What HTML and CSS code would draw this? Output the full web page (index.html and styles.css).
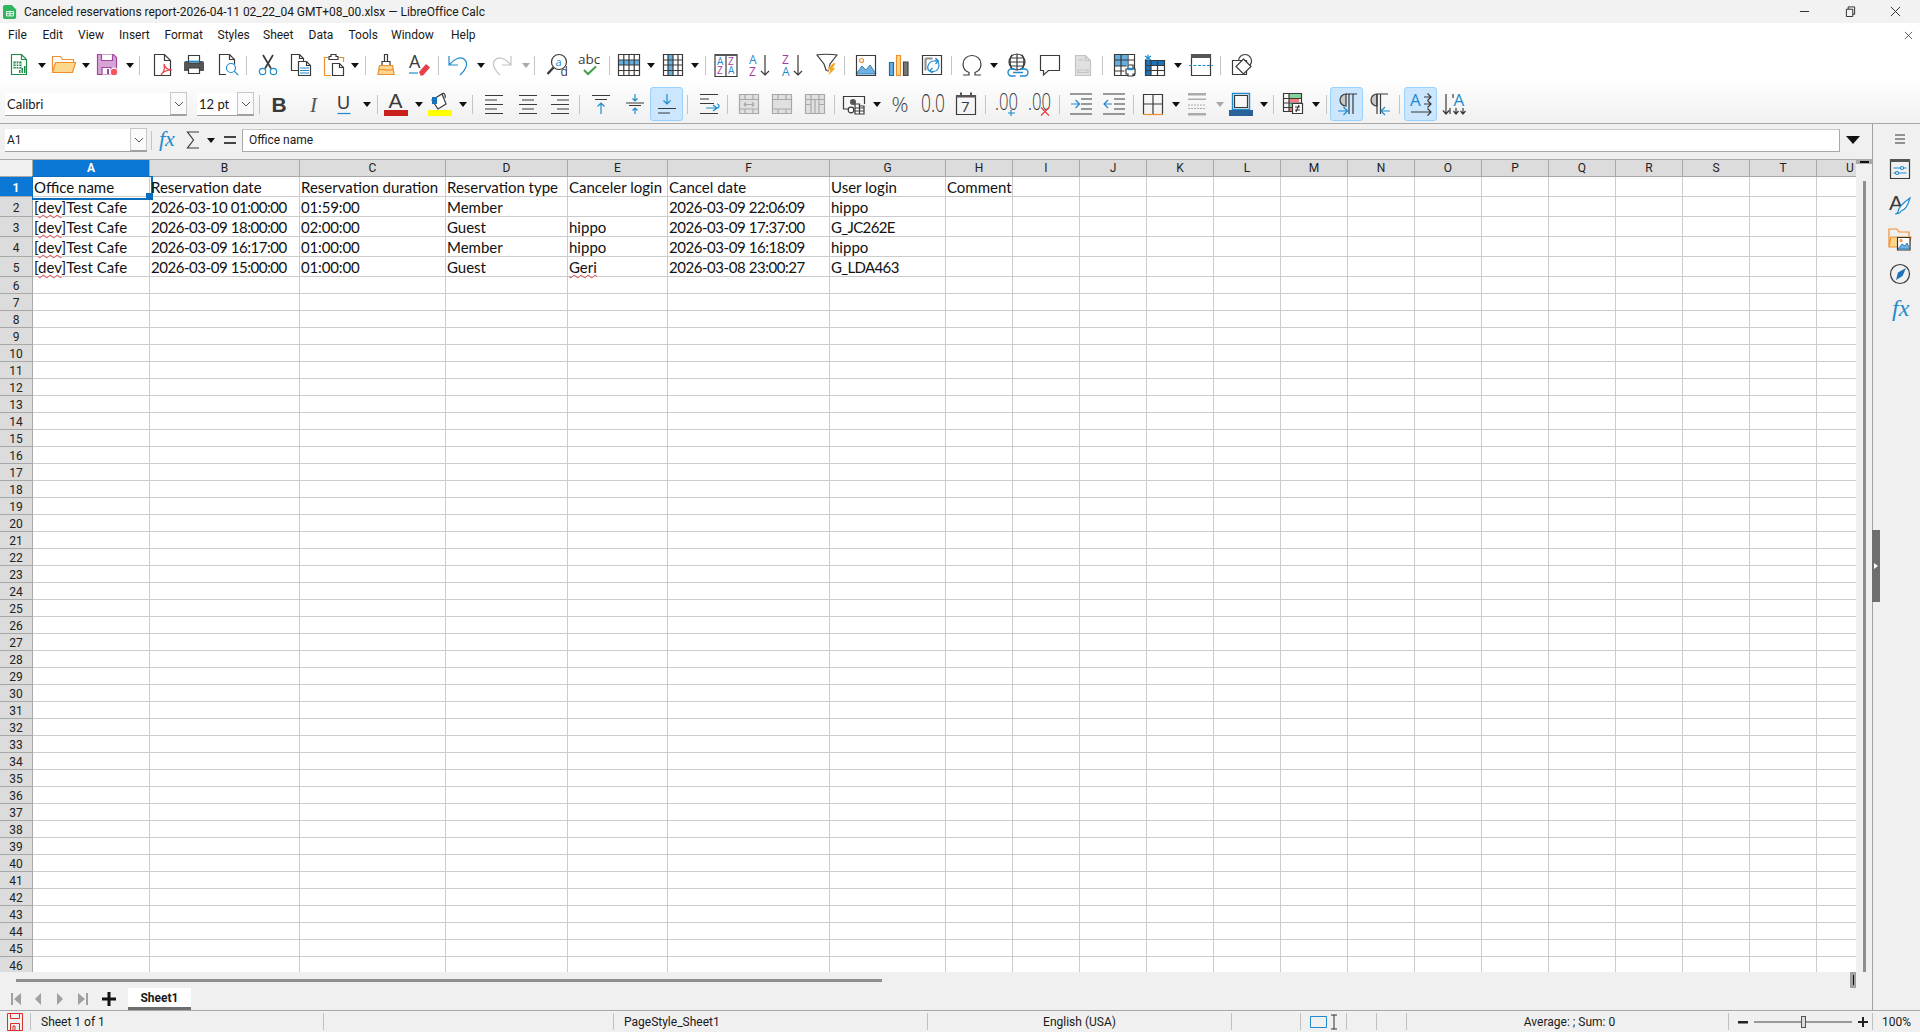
FILE: index.html
```html
<!DOCTYPE html>
<html lang="en">
<head>
<meta charset="utf-8">
<title>LibreOffice Calc</title>
<link rel="stylesheet" href="styles.css">
</head>
<body>
<div class="app">
<header class="titlebar">
  <svg class="appicon" viewBox="0 0 16 16"><path class="f-lo" d="M2 0h8l5 5v9a2 2 0 0 1-2 2H2a2 2 0 0 1-2-2V2a2 2 0 0 1 2-2z"/><path class="w" d="M4 7.5h8v5H4zM8 7.5v5M4 10h8"/></svg>
  <span class="doc">Canceled reservations report-2026-04-11 02_22_04 GMT+08_00.xlsx — LibreOffice Calc</span>
  <div class="winbtns">
    <svg viewBox="0 0 12 12"><path d="M1 6h10"/></svg>
    <svg viewBox="0 0 12 12"><path d="M1.5 3.5h7v8h-7zM3.5 3.5V1h7v8H8.5"/></svg>
    <svg viewBox="0 0 12 12"><path d="M1 1l10 10M11 1 1 11"/></svg>
  </div>
</header>
<nav class="menubar">
  <span>File</span><span>Edit</span><span>View</span><span>Insert</span><span>Format</span><span>Styles</span><span>Sheet</span><span>Data</span><span>Tools</span><span>Window</span><span>Help</span>
  <svg class="docclose" viewBox="0 0 10 10"><path d="M1 1l8 8M9 1 1 9"/></svg>
</nav>
<div class="toolbars">
<div class="tb tb1">
<svg class="i" viewBox="0 0 24 24"><path class="gr" d="M4.5 1.5h10l5 5v15h-15zM14.5 1.5v5h5"/><path class="fgr" d="M6.5 8.5h8v7h-8zM12 17h1.500v3H12zM14.500 15h1.500v5h-1.500zM17 13h1.500v7H17z"/><path class="w" d="M6.500 11h8M6.500 13.500h8M9.200 8.500v7M11.800 8.500v7"/></svg>
<i class="dd"></i>
<svg class="i" viewBox="0 0 24 24"><path class="or" d="M.5 18V3.500h8l2 3h11V10"/><path class="or ffo" d="M.5 19.500 3.500 9.500h20l-3 10z"/></svg>
<i class="dd"></i>
<svg class="i" viewBox="0 0 24 24"><path class="pu fpl" d="M2.500 1.500h16l3 3v17h-19z"/><path class="pu fw" d="M6.500 1.500v6h11v-6M7 21.500v-7h9v7"/><path class="fpu" d="M12 16h2v5h-2z"/><circle class="fred" cx="19" cy="19" r="3.800"/></svg>
<i class="dd"></i>
<i class="sep"></i>
<svg class="i" viewBox="0 0 24 24"><path d="M3.500 1.500h10l6 6v15h-16zM13.500 1.500v6h6"/><path class="re" d="M10 22c3-3 4-7 3-11 1 4 4 6 8 6-5 0-9 1-11 5z"/></svg>
<svg class="i" viewBox="0 0 24 24"><path class="fdk" d="M4 8h16a2 2 0 0 1 2 2v8H2v-8a2 2 0 0 1 2-2z"/><path class="fw" d="M6.500 2.500h11V10h-11zM6.500 15h11v5.500h-11z"/><path class="bl bold" d="M6.500 8.500h11"/></svg>
<svg class="i" viewBox="0 0 24 24"><path d="M10 21.500H3.500v-20h10l5 5v5M13.500 1.500v5h5"/><circle class="bl" cx="15" cy="15" r="4.500"/><path class="bl" d="M18.200 18.200l4 4"/></svg>
<i class="sep"></i>
<svg class="i" viewBox="0 0 24 24"><path class="bold" d="M7 2l8 13.500M17 2 9 15.500"/><circle class="bl" cx="6.500" cy="18.500" r="3.200"/><circle class="bl" cx="17.500" cy="18.500" r="3.200"/></svg>
<svg class="i" viewBox="0 0 24 24"><path d="M9.500 17.500h-7v-16h8l4 4v2.500M10.500 1.500v4h4"/><path class="fw" d="M9.500 8.500h8l4 4v10h-12z"/><path d="M17.500 8.500v4h4"/><path class="bl" d="M11 15h9M11 17.500h9M11 20h9"/></svg>
<svg class="i" viewBox="0 0 24 24"><path class="or" d="M6 4.500H2.500v18H9M17 4.500h4.500V9"/><path d="M7 6.500V3.500h2V1.500h5v2h2v3z"/><path class="fw" d="M10.500 10.500h7l4 4v8h-11z"/><path d="M17.500 10.500v4h4"/></svg>
<i class="dd"></i>
<i class="sep"></i>
<svg class="i" viewBox="0 0 24 24"><path d="M10.500 1.500h3v7h-3zM8 8.500h8v4H8z"/><path class="or ffo" d="M5.500 12.500h13l1.500 9H4z"/><path class="or" d="M4.500 17c5-2 10 2 15-1"/></svg>
<svg class="i" viewBox="0 0 24 24"><text class="t" x="2" y="15" font-size="18">A</text><path class="bl" d="M2 20h9"/><path class="fred2" d="M12 19l7-8 4 3.500-7 8h-2.500z"/></svg>
<i class="sep"></i>
<svg class="i" viewBox="0 0 24 24"><path class="bl" d="M3 3v9h9M3.500 11.500C8 6 15 2.500 19 7s-.5 11-5 15"/></svg>
<i class="dd"></i>
<svg class="i" viewBox="0 0 24 24"><path class="gy" d="M21 3v9h-9M20.500 11.500C16 6 9 2.500 5 7s.5 11 5 15"/></svg>
<i class="dd off"></i>
<i class="sep"></i>
<svg class="i" viewBox="0 0 24 24"><circle cx="14" cy="9" r="7.500"/><path class="thick" d="M8.500 14.500 2.500 21"/><text class="t tb-bl" x="10.500" y="12.500" font-size="11">a</text><text class="t" x="15.500" y="22.500" font-size="12">d</text></svg>
<svg class="i" viewBox="0 0 24 24"><text class="t" x="1" y="11" font-size="13.500">abc</text><path class="gn" d="M7 17l4 4 8-7.500"/></svg>
<i class="sep"></i>
<svg class="i" viewBox="0 0 24 24"><path class="fbl" d="M2 7h20v5H2z"/><path d="M1.500 1.500h21v21h-21zM1.500 7h21M1.500 12h21M1.500 17.500h21M6.800 1.500v21M12 1.500v21M17.200 1.500v21"/></svg>
<i class="dd"></i>
<svg class="i" viewBox="0 0 24 24"><path class="fbl" d="M7 2h5v20H7z"/><path d="M2.500 1.500h19v21h-19zM2.500 7h19M2.500 12h19M2.500 17.500h19M7 1.500v21M12 1.500v21M17 1.500v21"/></svg>
<i class="dd"></i>
<i class="sep"></i>
<svg class="i" viewBox="0 0 24 24"><path d="M1 1.500h22v22H1zM12 3v20"/><path class="fdk" d="M1 1h22v2H1z"/><text class="t tb-bl" x="3" y="12" font-size="10">A</text><text class="t tb-pu" x="3" y="21" font-size="10">Z</text><text class="t tb-pu" x="14" y="12" font-size="10">Z</text><text class="t tb-bl" x="14" y="21" font-size="10">A</text></svg>
<svg class="i" viewBox="0 0 24 24"><text class="t tb-bl" x="1" y="11" font-size="12">A</text><text class="t tb-pu" x="1" y="22.500" font-size="12">Z</text><path d="M17 2v20M13 18l4 4 4-4"/></svg>
<svg class="i" viewBox="0 0 24 24"><text class="t tb-pu" x="1" y="11" font-size="12">Z</text><text class="t tb-bl" x="1" y="22.500" font-size="12">A</text><path d="M17 2v20M13 18l4 4 4-4"/></svg>
<svg class="i" viewBox="0 0 24 24"><path d="M2 2c3-1 15-1 20 0l-7 9v1l-2 6-2-1-2-6z"/><path class="ffl" d="M18 10l-6 7h3l-2 6 8-8h-3l3-5z"/></svg>
<i class="sep"></i>
<svg class="i" viewBox="0 0 24 24"><path class="fmt" d="M2 21l6-8 4 4 4-5 6 9z"/><path d="M2.500 2.500h19v20h-19z"/><circle class="or" cx="7.500" cy="7.500" r="2"/></svg>
<svg class="i" viewBox="0 0 24 24"><path class="fbl2" d="M2.500 9.500h4v13h-4z"/><path class="or ffo" d="M9.500 2.500h4v20h-4z"/><path class="fgy" d="M16.500 9h4.500v13.500h-4.500z"/></svg>
<svg class="i" viewBox="0 0 24 24"><path d="M2.500 2.500h19v19h-19z"/><path class="gy2" d="M5.500 5.500h7M5.500 5.500v12"/><path class="bl" d="M9 18c-3-4 0-10 5-10h4M15.500 5l3 3-3 3M15 7c4 1 5 5 3 9-2 3-5 3-8 2M12.500 15l-3 3 3 2"/></svg>
<i class="sep"></i>
<svg class="i" viewBox="0 0 24 24"><path d="M3 22h6v-2.500C5 18 3 14.500 3 11c0-5 4-8.500 9-8.500s9 3.500 9 8.500c0 3.500-2 7-6 8.500V22h6"/></svg>
<i class="dd"></i>
<svg class="i" viewBox="0 0 24 24"><circle cx="11" cy="9" r="8"/><path d="M3 9h16M11 1v16M6 1.500c-3 4-2 12 0 15M16 1.500c3 4 2 12 0 15M4 5h14M4 13h14"/><path class="bl2" d="M9.500 16h-4a3.500 3.500 0 0 0 0 7h4M14 16h4.500a3.500 3.500 0 0 1 0 7H14M7 19.500h10"/></svg>
<svg class="i" viewBox="0 0 24 24"><path d="M2.500 2.500h19v15h-11l-5 4.500v-4.500h-3z"/></svg>
<svg class="i" viewBox="0 0 24 24"><path class="gy ffg" d="M4.500 2.500h10l5 5v15h-15z"/><path class="gy" d="M14.500 2.500v5h5M7 17h10v2.500H7zM7 7h5"/></svg>
<i class="sep"></i>
<svg class="i" viewBox="0 0 24 24"><path class="fbl" d="M2 2h12v11H2z"/><path d="M1.500 1.500h20v21h-8h-12zM1.500 7h20M1.500 13h12M1.500 18h10M8 1.500v21M15 1.500v10"/><path class="fw" d="M15 12h5v4h-5zM13 16h9v5h-2v2h-5v-2h-2z"/><path class="bl thick" d="M15 16h5"/></svg>
<svg class="i" viewBox="0 0 24 24"><path class="fbld" d="M2 7h6v16H2zM8 7h14v5H8z"/><path d="M2.500 7.500h19v15h-19zM8 7.500v15M2.500 12.500h19M2.500 17.500h19M14.500 7.500v15"/><path class="bl" d="M5 1.500v7M2 3l6 4M8 3 2 7"/></svg>
<i class="dd"></i>
<svg class="i" viewBox="0 0 24 24"><path d="M2.500 1.500h19v21h-19z"/><path class="fdk" d="M2 1h20v4H2z"/><path class="bl dash" d="M0 12.500h24"/></svg>
<i class="sep"></i>
<svg class="i" viewBox="0 0 24 24"><circle class="fw" cx="15" cy="8" r="6.500"/><path class="fw" d="M2.500 7.500h14v14h-14z"/><path class="fw" d="M13.500 6 21 13.500 13.500 21 6 13.500z"/></svg>
</div>
<div class="tb tb2">
<div class="combo font"><span>Calibri</span><button class="chev"><svg viewBox="0 0 10 6"><path d="M1 1l4 4 4-4"/></svg></button></div>
<div class="combo size"><span>12 pt</span><button class="chev"><svg viewBox="0 0 10 6"><path d="M1 1l4 4 4-4"/></svg></button></div>
<i class="sep"></i>
<svg class="i" viewBox="0 0 24 24"><text class="t lib bd" x="4.500" y="20" font-size="21">B</text></svg>
<svg class="i" viewBox="0 0 24 24"><text class="t ser it gt" x="7" y="20" font-size="21">I</text></svg>
<svg class="i" viewBox="0 0 24 24"><text class="t lib" x="5" y="17" font-size="18">U</text><path class="bl" d="M5.500 21.500h13"/></svg>
<i class="dd"></i>
<i class="sep"></i>
<svg class="i" viewBox="0 0 24 24"><text class="t lib" x="4.500" y="16" font-size="21">A</text><path class="frd" d="M0 18h24v6H0z"/></svg>
<i class="dd"></i>
<svg class="i" viewBox="0 0 24 24"><path class="fyl" d="M0 18h24v6H0z"/><path class="fw" d="M4 8l10-6 4 10-8 5z"/><path class="fbld" d="M4 5h5v7H4z"/><path d="M14 2c2-2 4 1 3 4"/></svg>
<i class="dd"></i>
<i class="sep"></i>
<svg class="i" viewBox="0 0 24 24"><path d="M3 3.500h18M3 8h12M3 12.500h18M3 17h12M3 21.500h18"/></svg>
<svg class="i" viewBox="0 0 24 24"><path d="M3 3.500h18M6 8h12M3 12.500h18M6 17h12M3 21.500h18"/></svg>
<svg class="i" viewBox="0 0 24 24"><path d="M3 3.500h18M9 8h12M3 12.500h18M9 17h12M3 21.500h18"/></svg>
<i class="sep"></i>
<svg class="i" viewBox="0 0 24 24"><path d="M3 3.500h18M6 7.500h12"/><path class="bl" d="M12 22V11M8.500 14.500 12 11l3.500 3.500"/></svg>
<svg class="i" viewBox="0 0 24 24"><path d="M3 11h18M6 13.500h12"/><path class="bl" d="M12 2v7M9.500 6.500 12 9l2.500-2.500M12 22v-6M9.500 18.500 12 16l2.500 2.500"/></svg>
<div class="on"><svg class="i" viewBox="0 0 24 24"><path class="bl" d="M12 2v10M8.500 8.500 12 12l3.500-3.500"/><path d="M3 16.500h18M3 21h12"/></svg></div>
<i class="sep"></i>
<svg class="i" viewBox="0 0 24 24"><path d="M3 2.500h18M3 7h9M3 11.500h14M3 21.500h18"/><path class="bl" d="M9 16h11a2 2 0 0 0 0-4M16 13l4 3-4 3"/></svg>
<i class="sep"></i>
<svg class="i" viewBox="0 0 24 24"><path class="g2 ffg" d="M2.500 2.500h19v19h-19z"/><path class="g2" d="M2.500 7.500h19M2.500 17h19M8 2.500v5M16 2.500v5M8 17v4.500M16 17v4.500M7 12.500h10M7 12.500l2-2M7 12.500l2 2M17 12.500l-2-2M17 12.500l-2 2"/></svg>
<svg class="i" viewBox="0 0 24 24"><path class="g2 ffg" d="M2.500 2.500h19v19h-19z"/><path class="g2" d="M2.500 7.500h19M2.500 17h19M8 2.500v5M16 2.500v5M8 17v4.500M16 17v4.500"/></svg>
<svg class="i" viewBox="0 0 24 24"><path class="g2 ffg" d="M2.500 2.500h19v19h-19z"/><path class="g2" d="M2.500 7.500h19M8 2.500v5M16 2.500v5M8 7.500v14M16 7.500v14M12 7.500v14M2.500 12.500h6M16 12.500h5.500"/></svg>
<i class="sep"></i>
<svg class="i" viewBox="0 0 24 24"><path d="M7 17H1.500V4.500h21V12"/><circle class="fdk" cx="11" cy="10" r="3"/><circle class="fw" cx="9" cy="18" r="2.800"/><path class="fw" d="M13 12h4.500v2h4.500v8h-9z"/><path d="M13 16h9M13 19h9M17.500 12v10"/></svg>
<i class="dd"></i>
<svg class="i" viewBox="0 0 24 24"><text class="t thin" x="3.500" y="20" font-size="21">%</text></svg>
<svg class="i" viewBox="0 0 24 24"><text class="t thin" x="0" y="20" font-size="25" textLength="24" lengthAdjust="spacingAndGlyphs">0.0</text></svg>
<svg class="i" viewBox="0 0 24 24"><path d="M2.500 3.500h19v19h-19z"/><path class="fdk" d="M2 3h20v2.500H2zM6 .5h2v3H6zM16 .5h2v3h-2z"/><text class="t" x="7" y="20" font-size="15">7</text></svg>
<i class="sep"></i>
<svg class="i" viewBox="0 0 24 24"><text class="t thin" x="0" y="18" font-size="24" textLength="23" lengthAdjust="spacingAndGlyphs">.00</text><path class="bl" d="M16 18v6M13 21h7"/></svg>
<svg class="i" viewBox="0 0 24 24"><text class="t thin" x="0" y="18" font-size="24" textLength="23" lengthAdjust="spacingAndGlyphs">.00</text><path class="re" d="M13 15.500l8 8M21 15.500l-8 8"/></svg>
<i class="sep"></i>
<svg class="i" viewBox="0 0 24 24"><path d="M1 2h22M12 7h11M12 12h11M12 17h11M1 22h22"/><path class="bl" d="M2 12h8M6.500 8l4 4-4 4"/></svg>
<svg class="i" viewBox="0 0 24 24"><path d="M1 2h22M12 7h11M12 12h11M12 17h11M1 22h22"/><path class="bl" d="M10 12H2M6 8l-4 4 4 4"/></svg>
<i class="sep"></i>
<svg class="i" viewBox="0 0 24 24"><path d="M2.500 22V2.500h19V22M12 2.500V22M2.500 12h19"/><path class="or" d="M2 22.500h20"/></svg>
<i class="dd"></i>
<svg class="i" viewBox="0 0 24 24"><path class="g3" d="M3 1h18v2.500H3zM3 6.500h18v1.500H3z"/><path class="g4" d="M3 13h18M3 16.500h18"/><path class="g3" d="M3 21h18v2.500H3z"/></svg>
<i class="dd off"></i>
<svg class="i" viewBox="0 0 24 24"><path class="bl2" d="M3.500 1.500h17v16h-17z"/><path d="M5.500 3.500h13v12h-13z"/><path class="fbar" d="M0 18h24v6H0z"/></svg>
<i class="dd"></i>
<i class="sep"></i>
<svg class="i" viewBox="0 0 24 24"><path class="fg2" d="M8 2h12v5H8z"/><path class="frd2" d="M8 7h10v3H8zM8 15h3v4H8z"/><path class="fg3" d="M8 11h6v4H8z"/><path d="M2.500 1.500h18v18h-18zM2.500 6.500h18M2.500 11h18M2.500 15.500h18M8 1.500v18"/><path class="fw" d="M11.500 11.500h10v10h-10z"/><path d="M14 15h5M14 18h5M18 13l-3 7"/></svg>
<i class="dd"></i>
<i class="sep"></i>
<div class="on"><svg class="i" viewBox="0 0 24 24"><path class="gf" d="M11 2a6 6 0 1 0 0 12z"/><path d="M11 2h11M14 2v20M18 2v20"/><path class="bl" d="M3 19h9M8.500 15l4 4-4 4"/></svg></div>
<svg class="i" viewBox="0 0 24 24"><path class="gf" d="M9 2a6 6 0 1 0 0 12z"/><path d="M9 2h11M9 2v20M12.500 2v20"/><path class="bl" d="M22 19h-9M17 15l-4 4 4 4"/></svg>
<i class="sep"></i>
<div class="on"><svg class="i" viewBox="0 0 24 24"><text class="t tb-bl" x="1" y="14" font-size="17">A</text><path class="bl0" d="M15 5h7M18.500 1.500 22 5l-3.500 3.500M15 12h7M18.500 8.500 22 12l-3.500 3.500M2 20h20M18.500 16.500 22 20l-3.500 3.500"/></svg></div>
<svg class="i" viewBox="0 0 24 24"><text class="t tb-bl" x="11.500" y="14" font-size="17">A</text><path d="M4 2v20M1 18.500 4 22l3-3.500M11 2v4M14 16v6M11.500 19 14 22l2.500-3M21 16v6M18.500 19 21 22l2.500-3M8 16v6"/></svg>
</div>
</div>
<div class="work">
<div class="main">
<div class="formula">
  <div class="combo name"><span>A1</span><button class="chev"><svg viewBox="0 0 10 6"><path d="M1 1l4 4 4-4"/></svg></button></div>
  <i class="sep"></i>
  <svg class="i" viewBox="0 0 24 24"><text class="t ser it tb-bl" x="2" y="18" font-size="22">fx</text></svg>
  <svg class="i sm" viewBox="0 0 14 24"><path d="M13 4H1.500l6 8-6 8H13"/></svg>
  <i class="dd"></i>
  <div class="eq"></div>
  <div class="finput">Office name</div>
  <i class="bigdd"></i>
</div>
<div class="sheetrow">
<div class="sheet">
<div class="rowheads">
<div class="corner"></div>
<div class="rh tall sel">1</div><div class="rh tall">2</div><div class="rh tall">3</div><div class="rh tall">4</div><div class="rh tall">5</div>
<div class="rh">6</div><div class="rh">7</div><div class="rh">8</div><div class="rh">9</div><div class="rh">10</div><div class="rh">11</div><div class="rh">12</div><div class="rh">13</div><div class="rh">14</div><div class="rh">15</div><div class="rh">16</div><div class="rh">17</div><div class="rh">18</div><div class="rh">19</div><div class="rh">20</div><div class="rh">21</div><div class="rh">22</div><div class="rh">23</div><div class="rh">24</div><div class="rh">25</div><div class="rh">26</div><div class="rh">27</div><div class="rh">28</div><div class="rh">29</div><div class="rh">30</div><div class="rh">31</div><div class="rh">32</div><div class="rh">33</div><div class="rh">34</div><div class="rh">35</div><div class="rh">36</div><div class="rh">37</div><div class="rh">38</div><div class="rh">39</div><div class="rh">40</div><div class="rh">41</div><div class="rh">42</div><div class="rh">43</div><div class="rh">44</div><div class="rh">45</div><div class="rh">46</div>
</div>
<div class="col ca"><div class="ch sel">A</div><div class="cells"><div class="cell cur">Office name</div><div class="cell">[<u>dev</u>]Test Cafe</div><div class="cell">[<u>dev</u>]Test Cafe</div><div class="cell">[<u>dev</u>]Test Cafe</div><div class="cell">[<u>dev</u>]Test Cafe</div></div></div>
<div class="col cb"><div class="ch">B</div><div class="cells"><div class="cell">Reservation date</div><div class="cell dt">2026-03-10 01:00:00</div><div class="cell dt">2026-03-09 18:00:00</div><div class="cell dt">2026-03-09 16:17:00</div><div class="cell dt">2026-03-09 15:00:00</div></div></div>
<div class="col cc"><div class="ch">C</div><div class="cells"><div class="cell">Reservation duration</div><div class="cell tm">01:59:00</div><div class="cell tm">02:00:00</div><div class="cell tm">01:00:00</div><div class="cell tm">01:00:00</div></div></div>
<div class="col cd"><div class="ch">D</div><div class="cells"><div class="cell">Reservation type</div><div class="cell">Member</div><div class="cell">Guest</div><div class="cell">Member</div><div class="cell">Guest</div></div></div>
<div class="col ce"><div class="ch">E</div><div class="cells"><div class="cell">Canceler login</div><div class="cell"></div><div class="cell">hippo</div><div class="cell">hippo</div><div class="cell"><u>Geri</u></div></div></div>
<div class="col cf"><div class="ch">F</div><div class="cells"><div class="cell">Cancel date</div><div class="cell dt">2026-03-09 22:06:09</div><div class="cell dt">2026-03-09 17:37:00</div><div class="cell dt">2026-03-09 16:18:09</div><div class="cell dt">2026-03-08 23:00:27</div></div></div>
<div class="col cg"><div class="ch">G</div><div class="cells"><div class="cell">User login</div><div class="cell">hippo</div><div class="cell code">G_JC262E</div><div class="cell">hippo</div><div class="cell code">G_LDA463</div></div></div>
<div class="col"><div class="ch">H</div><div class="cells"><div class="cell">Comment</div></div></div>
<div class="col"><div class="ch">I</div><div class="cells"></div></div>
<div class="col"><div class="ch">J</div><div class="cells"></div></div>
<div class="col"><div class="ch">K</div><div class="cells"></div></div>
<div class="col"><div class="ch">L</div><div class="cells"></div></div>
<div class="col"><div class="ch">M</div><div class="cells"></div></div>
<div class="col"><div class="ch">N</div><div class="cells"></div></div>
<div class="col"><div class="ch">O</div><div class="cells"></div></div>
<div class="col"><div class="ch">P</div><div class="cells"></div></div>
<div class="col"><div class="ch">Q</div><div class="cells"></div></div>
<div class="col"><div class="ch">R</div><div class="cells"></div></div>
<div class="col"><div class="ch">S</div><div class="cells"></div></div>
<div class="col"><div class="ch">T</div><div class="cells"></div></div>
<div class="col"><div class="ch">U</div><div class="cells"></div></div>
</div>
<div class="vscroll"><div class="vsplit"><i></i></div><div class="vthumb"></div></div>
</div>
<div class="below">
  <div class="hscrollrow"><div class="hthumb"></div><div class="hsplit"><i></i></div></div>
  <div class="tabs">
    <svg class="nav" viewBox="0 0 12 14"><path class="navf" d="M0 1h2v12H0zM10 1v12L3 7z"/></svg>
    <svg class="nav" viewBox="0 0 12 14"><path class="navf" d="M9 1v12L3 7z"/></svg>
    <svg class="nav" viewBox="0 0 12 14"><path class="navf" d="M3 1v12l6-6z"/></svg>
    <svg class="nav" viewBox="0 0 12 14"><path class="navf" d="M12 1h-2v12h2zM2 1v12l7-6z"/></svg>
    <svg class="plus" viewBox="0 0 14 14"><path d="M0 5.500h14v3H0zM5.500 0h3v14h-3z"/></svg>
    <div class="tab">Sheet1</div>
  </div>
</div>
</div>
<aside class="sidebar">
  <svg class="burger" viewBox="0 0 12 12"><path d="M1 2h10M1 6h10M1 10h10"/></svg>
  <svg class="i" viewBox="0 0 24 24"><path d="M2.500 2.500h19v19h-19z"/><path class="fdk" d="M2 2h20v3H2z"/><path class="bl" d="M5.500 11h13M5.500 16h13"/><circle class="bl fw" cx="14" cy="11" r="1.500"/><circle class="bl fw" cx="9" cy="16" r="1.500"/></svg>
  <svg class="i" viewBox="0 0 24 24"><text class="t lib" x="1" y="18" font-size="21">A</text><path class="bl fw" d="M10 20c0-4 5-9 12-14-2 7-5 12-9 13-1 2-2 3-6 3 2 0 2-1 3-2z"/></svg>
  <svg class="i" viewBox="0 0 24 24"><path class="or" d="M1 19V2h8l2 3h10v5"/><path class="or ffo" d="M1 20 3 10h20l-2 10z"/><path class="fw" d="M9.500 10.500h12.500V23H9.500z"/><path class="fmt" d="M10 22l4-5 3 2 2-3 3 6z"/><circle class="or" cx="13" cy="13.500" r="1"/></svg>
  <svg class="i" viewBox="0 0 24 24"><circle cx="12" cy="12" r="9.500"/><path class="fbld" d="M18 6l-3.500 8L8 18l2-7.500z"/></svg>
  <svg class="i" viewBox="0 0 24 24"><text class="t ser it tb-bl" x="4" y="19" font-size="24">fx</text></svg>
</aside>
<div class="handle"><i></i></div>
</div>
<footer class="status">
  <div class="st"><svg class="stsave" viewBox="0 0 16 18"><path d="M.5.500h15v17H.500zM3.500.500v5h9v-5M3.500 17.500v-7h9v7M6 17v-4h2v4"/></svg></div>
  <div class="st left">Sheet 1 of 1</div>
  <div class="st"></div>
  <div class="st left">PageStyle_Sheet1</div>
  <div class="st">English (USA)</div>
  <div class="st"></div>
  <div class="st"><svg class="selm" viewBox="0 0 28 16"><path class="bl" d="M.5 2.500h16v11H.5z"/><path d="M21 1h6M24 1v14M21 15h6"/></svg></div>
  <div class="st"></div>
  <div class="st"></div>
  <div class="st avg">Average: ; Sum: 0</div>
  <div class="st zoom"><svg class="zm" viewBox="0 0 10 10"><path d="M0 4h10v2.500H0z"/></svg><div class="slider"><i></i></div><svg class="zm" viewBox="0 0 10 10"><path d="M0 4h10v2H0zM4 0h2v10H4z"/></svg></div>
  <div class="st last">100%</div>
</footer>
</div>
</body>
</html>
```
FILE: styles.css
```css
*{box-sizing:border-box}
html,body{margin:0;height:100%}
body{font:12px Roboto,"Noto Sans",sans-serif;color:#1a1a1a;background:#f0f0f0;overflow:hidden}
.app{width:1920px;height:1032px;display:flex;flex-direction:column;position:relative}
.titlebar{height:23px;background:#f2f2f2;display:flex;align-items:center;padding-left:3px;flex:none}
.appicon{width:14px;height:14px;margin-right:7px}
.f-lo{fill:#2fb45f}
.w{stroke:#fff;fill:none;stroke-width:1}
.doc{font-size:12px;white-space:nowrap;letter-spacing:-.04px}
.winbtns{margin-left:auto;display:flex;gap:34.5px;padding-right:19px;align-items:center}
.winbtns svg{width:11px;height:11px;fill:none;stroke:#222;stroke-width:1}
.menubar{height:24px;background:#fff;display:grid;grid-template-columns:34.5px 35.5px 41px 45.500px 53px 45.500px 45.500px 40px 42.500px 60px 1fr 16px;align-items:center;padding-left:8px;flex:none}
.docclose{width:9px;height:9px;fill:none;stroke:#555;stroke-width:1}
.toolbars{height:77px;flex:none;background:linear-gradient(#fff 0,#fff 30px,#f0f0f0 76px);border-bottom:1px solid #a8a8a8}
.tb{display:grid;align-items:center;justify-items:start}
.tb1{height:36px;margin-bottom:2px;padding-left:7px;grid-template-columns:31px 14px 30px 13px 31px 13px 12px 31px 34px 30px 10px 33px 33px 29px 14px 9px 33px 31px 8px 31px 13px 32px 12px 11px 32px 32px 8px 30px 14px 30px 14px 9px 34px 33px 34px 29px 10px 33px 33px 31px 9px 30px 16px 32px 33px 31px 11px 30px 31px 15px 31px 10px 24px}
.tb2{height:38px;padding-left:5px;grid-template-columns:192px 62px 8px 36px 29px 31px 14px 7px 31px 13px 31px 13px 10px 34px 32px 31px 10px 34px 27px 37px 10px 30px 10px 33px 33px 31px 8px 31px 15px 33px 33px 31px 10px 33px 31px 10px 33px 31px 8px 31px 13px 31px 13px 31px 13px 8px 31px 14px 4px 38px 31px 5px 38px 24px}
.i{width:24px;height:24px;display:block;fill:none;stroke:#3a3a3a;stroke-width:1.2;overflow:visible}
.dd{display:block;width:0;height:0;border-left:4px solid transparent;border-right:4px solid transparent;border-top:5px solid #111}
.dd.off{border-top-color:#a8a8a8}
.sep{display:block;width:1px;height:19px;background:#c4c4c4}
.on{width:33px;height:34px;background:#cbe6fd;border:1px solid #99d1ff;border-radius:3px;display:flex;align-items:center;justify-content:center}
.gr{stroke:#1b8d46}.fgr{fill:#1b8d46;stroke:none}
.or{stroke:#ef8f2f}.ffo{fill:#fbd88e}.ffl{fill:#f6a623;stroke:#fff;stroke-width:.5}
.pu{stroke:#a1479f}.fpl{fill:#d8a4d6}.fpu{fill:#a1479f;stroke:none}.fw{fill:#fff}
.fred{fill:#f0565c;stroke:#fff}.fred2{fill:#e8404a;stroke:none}
.re{stroke:#e8404a}.bl{stroke:#1e8bcd}.bl0{stroke:#3a3a3a}.bl2{stroke:#1e8bcd;stroke-width:1.4}
.bold{stroke-width:1.7}.thick{stroke-width:2.4}
.gy{stroke:#c4c4c4}.gy2{stroke:#8c8c8c;stroke-width:2}.ffg{fill:#e0e0e0}
.gn{stroke:#43a047;stroke-width:2}
.fdk{fill:#555;stroke:none}.fbl{fill:#64aee0;stroke:none}.fbl2{fill:#64aee0;stroke:#1e6fa8}.fbld{fill:#1b72b8;stroke:none}
.fgy{fill:#777;stroke:#444}.fmt{fill:#6fb1e3;stroke:#1e6fa8;stroke-width:.8}
.dash{stroke-dasharray:3 1.500}
.t{stroke:none;fill:#3a3a3a;font-family:"Open Sans",sans-serif}
.thin{font-weight:300}
.tb-bl{fill:#1e8bcd}.tb-pu{fill:#a33ea1}
.lib{font-family:"Liberation Sans",sans-serif}.bd{font-weight:700}
.ser{font-family:"Liberation Serif",serif}.it{font-style:italic}.gt{fill:#555}
.frd{fill:#c8201a;stroke:none}.fyl{fill:#ffff00;stroke:none}
.g2{stroke:#a8a8a8}.g3{fill:#ababab;stroke:none}.g4{stroke:#ababab;stroke-dasharray:2 1}
.fbar{fill:#2a6099;stroke:none}
.fg2{fill:#86d39b;stroke:none}.frd2{fill:#f47c7c;stroke:none}.fg3{fill:#86d39b;stroke:none}
.gf{fill:#c8c8c8;stroke:#3a3a3a}
.combo{display:flex;align-items:center;background:#fff;border-bottom:1px solid #a0a0a0;height:23px;font-family:"Lato",sans-serif;font-size:13px}
.combo span{flex:1;padding-left:2px}
.font{width:182px}.size{width:57px}.name{width:142px;font-family:Roboto,sans-serif;font-size:12px}
.chev{width:17px;height:23px;padding:0;border:1px solid #c8c8c8;border-bottom:1px solid #a0a0a0;background:#fafafa;display:flex;align-items:center;justify-content:center}
.chev svg{width:10px;height:6px;fill:none;stroke:#555;stroke-width:1}
.work{flex:1;display:flex;min-height:0;position:relative}
.main{width:1872px;display:flex;flex-direction:column;flex:none}
.formula{height:36px;flex:none;display:grid;align-items:center;align-content:start;justify-items:start;padding:4px 0 0 5px;grid-template-columns:146px 6px 29px 21px 17px 18px 1604px 14px;border-bottom:1px solid #a8a8a8}
.sm{width:14px}
.eq{width:12px;height:8px;border-top:2px solid #444;border-bottom:2px solid #444}
.finput{width:1598px;height:23px;background:#fff;border:1px solid #a8a8a8;border-top-color:#c8c8c8;display:flex;align-items:center;padding-left:6px;font-size:12px}
.bigdd{display:block;width:0;height:0;border-left:7px solid transparent;border-right:7px solid transparent;border-top:8px solid #111}
.sheetrow{display:flex;height:812px;flex:none}
.sheet{width:1856px;display:flex;overflow:hidden;background:#fff}
.rowheads{width:33px;flex:none;background:#dcdcdc;height:812px;overflow:hidden}
.corner{height:17px;background:#f0f0f0;border-right:1px solid #a8a8a8;border-bottom:1px solid #a8a8a8}
.rh{height:17px;border-right:1px solid #a8a8a8;border-bottom:1px solid #a8a8a8;text-align:center;line-height:19px;font-size:12px;color:#222}
.rh.tall{height:20px;line-height:22px}
.sel{background:#0a78d4;color:#fff;font-weight:700}
.col{width:67px;flex:none;display:flex;flex-direction:column}
.ca{width:117px}.cb{width:150px}.cc{width:146px}.cd{width:122px}.ce{width:100px}.cf{width:162px}.cg{width:116px}
.ch{height:17px;flex:none;background:#dcdcdc;border-right:1px solid #a8a8a8;border-bottom:1px solid #a8a8a8;text-align:center;line-height:16px;font-size:12px;color:#222}
.ch.sel{background:#0a78d4;color:#fff}
.cells{flex:1;border-right:1px solid #ccc;background-image:repeating-linear-gradient(transparent 0,transparent 19px,#ccc 19px,#ccc 20px),repeating-linear-gradient(transparent 0,transparent 16px,#ccc 16px,#ccc 17px);background-size:100% 100px,100% 100%;background-position:0 0,0 100px;background-repeat:no-repeat}
.cell{height:20px;padding-left:1px;font:15px/21px "Lato",sans-serif;color:#111;white-space:nowrap;position:relative}
.dt{letter-spacing:-.45px}.tm{letter-spacing:-.15px}.code{letter-spacing:-.65px}
.cell u{text-decoration:underline wavy #e33e44 1.3px;text-decoration-skip-ink:none}
.cur::after{content:"";position:absolute;left:-1px;top:-1px;width:118px;height:21px;border:1px solid #0a6ebd;border-right-width:2px;border-bottom-width:2px}
.cur::before{content:"";position:absolute;left:113px;top:16px;width:5px;height:5px;background:#0a6ebd;z-index:1}
.vscroll{width:16px;flex:none;background:#f0f0f0;display:flex;flex-direction:column;align-items:center}
.vsplit{width:16px;height:5px;margin-top:-1px;background:#aaa;display:flex;align-items:center;justify-content:center}
.vsplit i{width:9px;height:2px;background:#111}
.vthumb{width:3px;flex:1;margin-top:17px;background:#8e8e8e}
.below{flex:1;display:flex;flex-direction:column}
.hscrollrow{height:16px;display:flex;align-items:center;padding-left:16px;width:1856px;justify-content:space-between}
.hthumb{width:866px;height:3px;background:#8e8e8e}
.hsplit{width:6px;height:16px;background:#a0a0a0;display:flex;align-items:center;justify-content:center}
.hsplit i{width:1px;height:10px;background:#111}
.tabs{height:22px;display:grid;align-items:center;justify-items:start;padding-left:11px;grid-template-columns:21px 22px 22px 26px 26px 63px}
.nav{width:12px;height:14px}.navf{fill:#a0a0a0}
.plus{width:14px;height:14px;fill:#111}
.tab{width:63px;height:22px;background:#fff;border-bottom:3px solid #6e6e6e;text-align:center;font-weight:700;line-height:21px}
.sidebar{flex:1;border-left:1px solid #a0a0a0;display:flex;flex-direction:column;align-items:center;gap:11px;padding:9px 0 0 7px}
.burger{width:12px;height:12px;fill:none;stroke:#333;stroke-width:1;flex:none;margin-bottom:1px}
.sidebar .i{flex:none}
.handle{position:absolute;left:1872px;top:406px;width:8px;height:72px;background:#6e6e6e;display:flex;align-items:center;justify-content:center}
.handle i{width:0;height:0;border-top:3px solid transparent;border-bottom:3px solid transparent;border-left:4px solid #fff}
.status{height:22px;flex:none;border-top:1px solid #a8a8a8;display:grid;grid-template-columns:31px 293px 290px 314px 304px 69px 46px 30px 30px 322px 144px 47px;align-items:center}
.st{height:17px;border-right:1px solid #c0c0c0;display:flex;align-items:center;justify-content:center;font-size:12px;white-space:nowrap}
.st.left{justify-content:flex-start;padding-left:10px}
.st.avg{padding-left:4px}
.st.last{border-right:none}
.stsave{width:16px;height:18px;fill:none;stroke:#d8312b;stroke-width:1}
.selm{width:28px;height:16px;fill:none;stroke:#333;stroke-width:1}
.zoom{gap:6px;justify-content:center;padding-left:4px}
.zm{width:10px;height:10px;fill:#222}
.slider{width:98px;height:2px;background:#999;position:relative}
.slider i{position:absolute;left:47px;top:-5px;width:5px;height:12px;background:#ddd;border:1px solid #555}
```
